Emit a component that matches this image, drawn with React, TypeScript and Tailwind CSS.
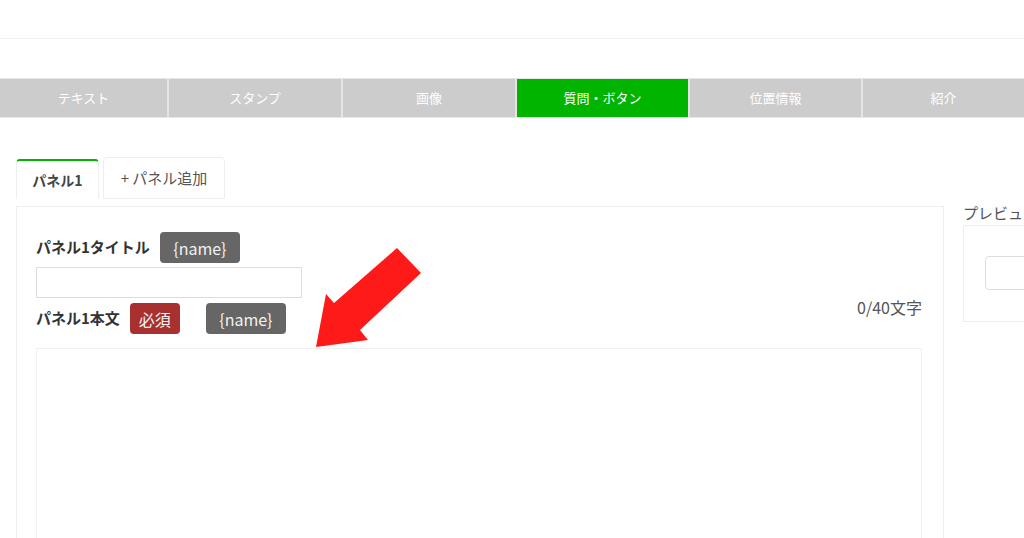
import React from "react";

const TABS = [
  { label: "テキスト", w: "w-[167px]" },
  { label: "スタンプ", w: "w-[174px]" },
  { label: "画像", w: "w-[174px]" },
  { label: "質問・ボタン", w: "w-[173px]", active: true },
  { label: "位置情報", w: "w-[173px]" },
  { label: "紹介", w: "flex-1" },
];

function Badge({ children, tone }: { children: React.ReactNode; tone: "gray" | "red" }) {
  return (
    <span
      className={`inline-flex items-center justify-center h-[31px] rounded-[4px] text-[16px] text-[#f2f2f2] ${
        tone === "red" ? "bg-[#a8302f] w-[50px] text-[15px]" : "bg-[#666666] w-[80px]"
      }`}
    >
      {children}
    </span>
  );
}

export default function App() {
  return (
    <div
      className="relative h-[538px] w-[1024px] overflow-hidden bg-white text-[#333]"
      style={{ fontFamily: '"Noto Sans CJK JP", "Open Sans", sans-serif' }}
    >
      {/* header */}
      <div className="h-[39px] border-b border-[#f2f2f2]" />

      {/* message type tabs */}
      <div className="mt-[39px] flex h-[40px] border-y border-[#e6e6e6] bg-[#cccccc]">
        {TABS.map((t, i) => (
          <div
            key={t.label}
            className={`${t.w} flex items-center justify-center text-[13px] text-white ${
              i > 0 ? "border-l-2 border-[#e4e4e4]" : ""
            } ${t.active ? "bg-[#00b400]" : ""}`}
          >
            {t.label}
          </div>
        ))}
      </div>

      <div className="flex gap-[19px] pl-[16px] pt-[39px]">
        {/* left column */}
        <div className="w-[928px] shrink-0">
          {/* panel tabs */}
          <div className="flex items-end gap-[4px]">
            <div className="flex h-[40px] w-[83px] items-center justify-center rounded-t-[4px] border-x border-t-2 border-x-[#eeeeee] border-t-[#00b400] text-[14px] font-bold text-[#444]">
              パネル1
            </div>
            <div className="flex h-[42px] w-[122px] items-center justify-center rounded-t-[4px] border border-[#eeeeee] text-[15px] text-[#555]">
              + パネル追加
            </div>
          </div>

          {/* panel body */}
          <div className="mt-[7px] h-[340px] border border-[#eeeeee] pl-[19px] pr-[21px] pt-[25px]">
            <div className="flex items-center gap-[10px]">
              <span className="text-[15px] font-bold">パネル1タイトル</span>
              <Badge tone="gray">{"{name}"}</Badge>
            </div>
            <div className="mt-[4px] h-[31px] w-[266px] border border-[#dddddd]" />

            <div className="mt-[5px] flex items-start justify-between">
              <div className="flex items-center">
                <span className="mr-[10px] text-[15px] font-bold">パネル1本文</span>
                <Badge tone="red">必須</Badge>
                <span className="ml-[26px]">
                  <Badge tone="gray">{"{name}"}</Badge>
                </span>
              </div>
              <span className="-mt-[8px] text-[16px] text-[#555]">0/40文字</span>
            </div>

            <div className="mt-[14px] h-[220px] border border-[#f0f0f0]" />
          </div>
        </div>

        {/* preview column */}
        <div className="mt-[47px] w-[200px] shrink-0">
          <div className="h-[21px] text-[15px] leading-[18px] text-[#555]">プレビュー</div>
          <div className="h-[97px] border border-[#eeeeee] pl-[21px] pt-[30px]">
            <div className="h-[34px] rounded-[4px] border border-[#dddddd]" />
          </div>
        </div>
      </div>

      {/* red arrow annotation */}
      <svg className="pointer-events-none absolute left-0 top-0" width="1024" height="538">
        <polygon
          points="316,347 326,294 334,303 397,248 421,273 360,330 368,340"
          fill="#ff1a1a"
        />
      </svg>
    </div>
  );
}
